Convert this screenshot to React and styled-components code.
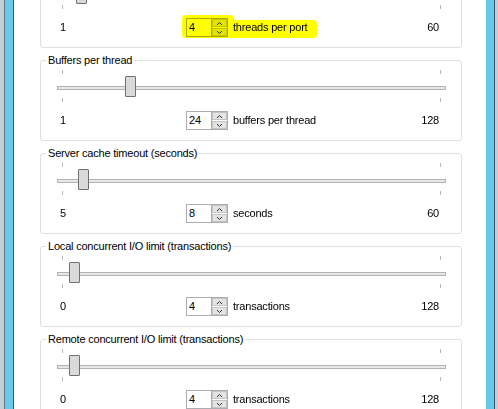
import React from 'react';
import styled, { createGlobalStyle } from 'styled-components';

const groups = [
  { min: 1, max: 60, value: 4, unit: 'threads per port', marked: true },
  { title: 'Buffers per thread', min: 1, max: 128, value: 24, unit: 'buffers per thread' },
  { title: 'Server cache timeout (seconds)', min: 5, max: 60, value: 8, unit: 'seconds' },
  { title: 'Local concurrent I/O limit (transactions)', min: 0, max: 128, value: 4, unit: 'transactions' },
  { title: 'Remote concurrent I/O limit (transactions)', min: 0, max: 128, value: 4, unit: 'transactions' },
];

const TRAVEL = 378;

const Chevron = ({ up }) => (
  <svg width="5" height="3" viewBox="0 0 5 3">
    <polyline
      points={up ? '0,3 2.5,0.5 5,3' : '0,0 2.5,2.5 5,0'}
      fill="none"
      stroke="#303030"
      strokeWidth="1"
    />
  </svg>
);

const SettingGroup = ({ title, min, max, value, unit, marked }) => {
  const offset = Math.round(((value - min) / (max - min)) * TRAVEL);
  return (
    <Group>
      {title && <Legend>{title}</Legend>}
      <Slider>
        <Tick $top={9} $left={5} />
        <Tick $top={9} $left={383} />
        <Track />
        <Thumb style={{ left: offset }} />
        <Tick $top={37} $left={5} />
        <Tick $top={37} $left={383} />
      </Slider>
      <Row>
        <span>{min}</span>
        <Control $marked={marked}>
          <Spin>
            <SpinValue>{value}</SpinValue>
            <SpinButtons>
              <SpinButton><Chevron up /></SpinButton>
              <SpinButton><Chevron /></SpinButton>
            </SpinButtons>
          </Spin>
          <span>{unit}</span>
        </Control>
        <span>{max}</span>
      </Row>
    </Group>
  );
};

const App = () => {
  return (
    <>
      <GlobalStyle />
      <Window>
        <FrameLeft />
        <Content>
          <Column>
            {groups.map((g, i) => (
              <SettingGroup key={i} {...g} />
            ))}
          </Column>
        </Content>
        <FrameRight />
      </Window>
    </>
  );
};

export default App;

const GlobalStyle = createGlobalStyle`
  body {
    margin: 0;
    background: #ffffff;
    font-family: "Liberation Sans", Arial, sans-serif;
    font-size: 11px;
    letter-spacing: -0.2px;
    color: #000000;
  }
`;

const Window = styled.div`
  display: flex;
  width: 498px;
  height: 409px;
  overflow: hidden;
`;

const FrameLeft = styled.div`
  width: 14px;
  flex-shrink: 0;
  background: linear-gradient(
    to right,
    #c3ced4 0 4px,
    #5d7a88 4px 5px,
    #67c9e9 5px 13px,
    #3f5560 13px 14px
  );
`;

const FrameRight = styled.div`
  width: 12px;
  flex-shrink: 0;
  background: linear-gradient(
    to right,
    #67c9e9 0 8px,
    #3f5560 8px 9px,
    #c3ced4 9px 12px
  );
`;

const Content = styled.div`
  flex: 1;
  overflow: hidden;
  background: #ffffff;
  padding: 0 24px 0 26px;
`;

const Column = styled.div`
  display: flex;
  flex-direction: column;
  gap: 12px;
  margin-top: -33px;
`;

const Group = styled.div`
  position: relative;
  box-sizing: border-box;
  height: 81px;
  flex-shrink: 0;
  border: 1px solid #dcdfe3;
  border-radius: 3px;
`;

const Legend = styled.span`
  position: absolute;
  top: -7px;
  left: 5px;
  padding: 0 2px;
  line-height: 13px;
  background: #ffffff;
  white-space: nowrap;
`;

const Slider = styled.div`
  position: relative;
  height: 43px;
  margin: 0 15px 0 16px;
`;

const Track = styled.div`
  position: absolute;
  top: 25px;
  left: 0;
  right: 0;
  height: 4px;
  box-sizing: border-box;
  border: 1px solid #b3b3b3;
  background: #e7e7e7;
`;

const Thumb = styled.div`
  position: absolute;
  top: 15px;
  width: 11px;
  height: 21px;
  box-sizing: border-box;
  border: 1px solid #707070;
  border-radius: 1px;
  background: #dadada;
`;

const Tick = styled.div`
  position: absolute;
  top: ${(p) => p.$top}px;
  left: ${(p) => p.$left}px;
  width: 1px;
  height: 4px;
  background: #b8b8b8;
`;

const Row = styled.div`
  display: grid;
  grid-template-columns: 126px 1fr auto;
  align-items: center;
  height: 19px;
  margin-top: 7px;
  padding: 0 22px 0 19px;
  line-height: 13px;
`;

const Control = styled.div`
  position: relative;
  display: inline-flex;
  align-items: center;
  gap: 5px;
  justify-self: start;

  &::before,
  &::after {
    content: '';
    position: absolute;
    display: ${(p) => (p.$marked ? 'block' : 'none')};
    background: #ffff00;
    mix-blend-mode: multiply;
    pointer-events: none;
    border-radius: 4px;
  }
  &::before {
    top: -3px;
    bottom: -1px;
    left: -4px;
    width: 52px;
  }
  &::after {
    top: 2px;
    bottom: -1px;
    left: -4px;
    right: -10px;
  }
`;

const Spin = styled.div`
  display: flex;
  width: 42px;
  height: 19px;
`;

const SpinValue = styled.div`
  box-sizing: border-box;
  width: 25px;
  height: 19px;
  border: 1px solid #abadb3;
  border-right: none;
  padding: 2px 0 0 2px;
  line-height: 13px;
  background: #ffffff;
`;

const SpinButtons = styled.div`
  display: flex;
  flex-direction: column;
  gap: 1px;
  box-sizing: border-box;
  width: 17px;
  height: 19px;
  border: 1px solid #abadb3;
  background: #ffffff;
`;

const SpinButton = styled.div`
  flex: 1;
  display: flex;
  align-items: center;
  justify-content: center;
  background: #e3e3e3;
  border: 1px solid #c4c4c4;
`;
